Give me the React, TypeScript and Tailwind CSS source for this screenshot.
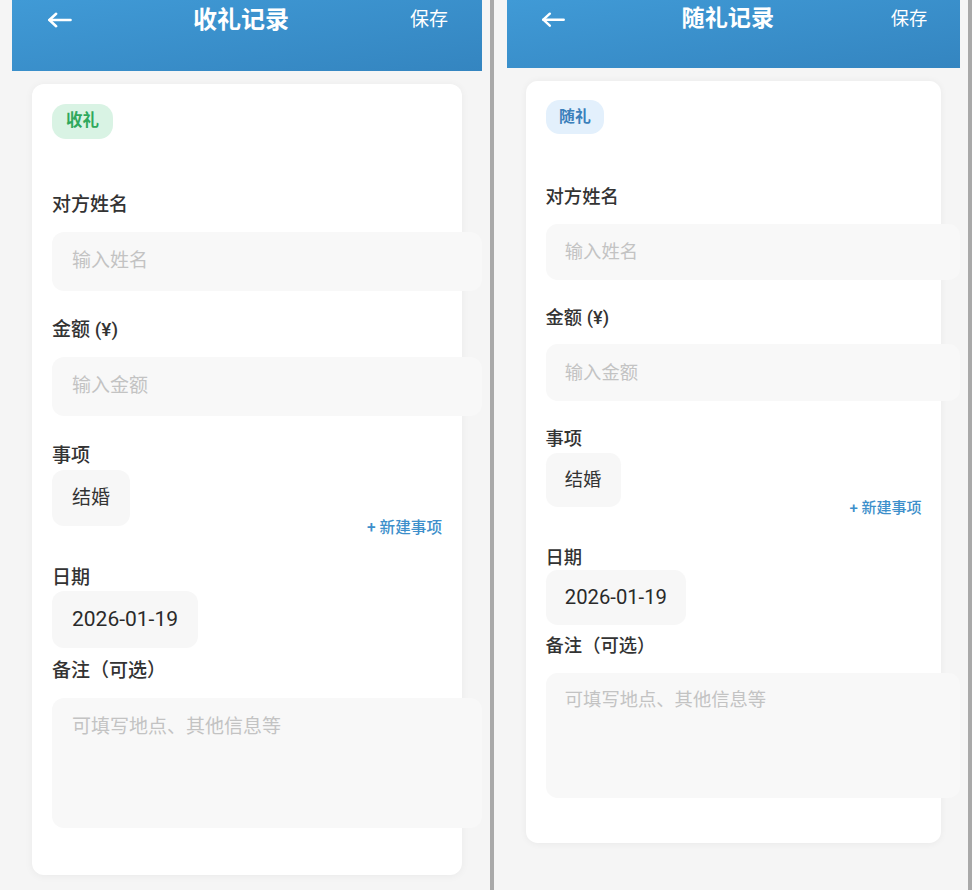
import React from 'react'

type Kind = 'in' | 'out'

function BackArrow() {
  return (
    <svg width="26" height="16" viewBox="0 0 26 16" fill="none" stroke="white" strokeWidth="2.6" strokeLinecap="round" strokeLinejoin="round">
      <line x1="2.5" y1="8" x2="24.5" y2="8" />
      <polyline points="9.5,1.5 2.5,8 9.5,14.5" />
    </svg>
  )
}

function Label({ children, className = '' }: { children: React.ReactNode; className?: string }) {
  return <div className={`text-[19px] font-medium leading-[28px] text-[#333] ${className}`}>{children}</div>
}

function Screen({ kind }: { kind: Kind }) {
  const isIn = kind === 'in'

  return (
    <div className="ml-[12px] w-[470px]">
      {/* header */}
      <div className="flex h-[71px] items-start justify-between bg-linear-to-br from-[#409ad6] to-[#3485c0] pl-[35px] pr-[34px] pt-[4px] text-white">
        <div className="flex h-[32px] w-[25px] items-center">
          <BackArrow />
        </div>
        <div className="text-[24px] font-bold leading-[32px]">{isIn ? '收礼记录' : '随礼记录'}</div>
        <div className="text-[19px] leading-[32px]">保存</div>
      </div>

      {/* form card */}
      <div className="mx-[20px] mt-[13px] rounded-[12px] bg-white px-[20px] pb-[47px] pt-[20px] shadow-[0_1px_8px_rgba(0,0,0,0.05)]">
        {isIn ? (
          <div className="mb-[52px] flex h-[35px] w-fit items-center rounded-[14px] bg-[#d9f3e4] px-[14px] text-[16.5px] font-bold text-[#2fa85c]">
            收礼
          </div>
        ) : (
          <div className="mb-[52px] flex h-[35px] w-fit items-center rounded-[14px] bg-[#e3f0fc] px-[14px] text-[16.5px] font-bold text-[#3b80bb]">
            随礼
          </div>
        )}

        <Label className="mb-[13px]">对方姓名</Label>
        <div className="mb-[25px] box-content flex h-[59px] w-full items-center rounded-[12px] bg-[#f8f8f8] px-[20px] text-[19px] text-[#c3c3c3]">
          输入姓名
        </div>

        <Label className="mb-[13px]">金额 (¥)</Label>
        <div className="mb-[26px] box-content flex h-[59px] w-full items-center rounded-[12px] bg-[#f8f8f8] px-[20px] text-[19px] text-[#c3c3c3]">
          输入金额
        </div>

        <Label>事项</Label>
        <div className="flex">
          <div className="flex h-[56px] items-center rounded-[12px] bg-[#f7f7f7] px-[20px] text-[19px] text-[#333]">结婚</div>
        </div>
        <div className="-mt-[6px] text-right text-[15.6px] font-medium leading-[16px] text-[#3d8fcb]">+ 新建事项</div>

        <div className="mt-[29px] text-[19px] font-medium leading-[26px] text-[#333]">日期</div>
        <div className="flex">
          <div className="flex h-[57px] items-center rounded-[12px] bg-[#f7f7f7] px-[20px] text-[21px] text-[#2a2a2a]">2026-01-19</div>
        </div>

        <Label className="mb-[13px] mt-[9px]">备注（可选）</Label>
        <div className="box-content h-[115px] w-full rounded-[12px] bg-[#f8f8f8] px-[20px] pt-[15px] text-[19px] leading-[28px] text-[#c3c3c3]">
          可填写地点、其他信息等
        </div>
      </div>
    </div>
  )
}

export default function App() {
  return (
    <div className="flex h-[890px] w-[972px] overflow-hidden bg-[#f5f5f5] font-['Roboto','Noto_Sans_CJK_SC',sans-serif]">
      <div className="w-[490px] shrink-0 bg-[#f5f5f5]">
        <Screen kind="in" />
      </div>
      <div className="w-[4px] shrink-0 bg-[#a9a9a9]" />
      <div className="w-[474px] shrink-0 bg-[#f5f5f5]">
        <div className="pl-[1.5px] [zoom:0.964]">
          <Screen kind="out" />
        </div>
      </div>
      <div className="w-[4px] shrink-0 bg-[#a9a9a9]" />
    </div>
  )
}
